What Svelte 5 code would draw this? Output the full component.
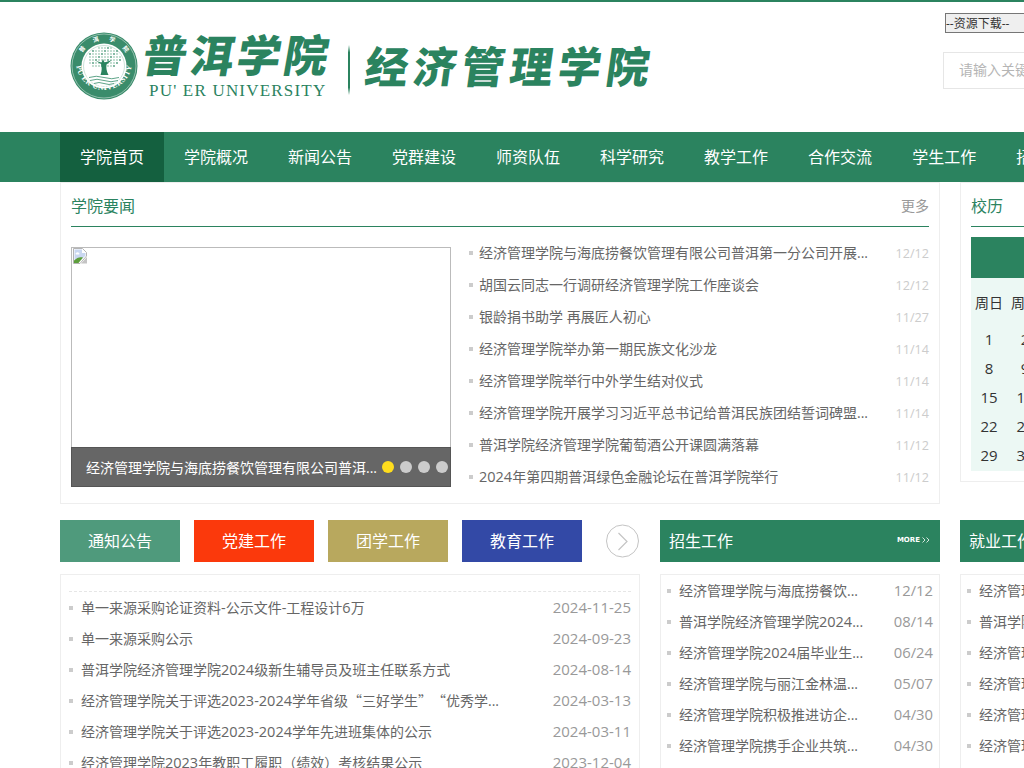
<script lang="ts">
	const navItems = ['学院首页', '学院概况', '新闻公告', '党群建设', '师资队伍', '科学研究', '教学工作', '合作交流', '学生工作', '招生就业'];

	const news = [
		['经济管理学院与海底捞餐饮管理有限公司普洱第一分公司开展...', '12/12'],
		['胡国云同志一行调研经济管理学院工作座谈会', '12/12'],
		['银龄捐书助学 再展匠人初心', '11/27'],
		['经济管理学院举办第一期民族文化沙龙', '11/14'],
		['经济管理学院举行中外学生结对仪式', '11/14'],
		['经济管理学院开展学习习近平总书记给普洱民族团结誓词碑盟...', '11/14'],
		['普洱学院经济管理学院葡萄酒公开课圆满落幕', '11/12'],
		['2024年第四期普洱绿色金融论坛在普洱学院举行', '11/12']
	];

	const tabs = [
		{ label: '通知公告', color: '#4f9a7c' },
		{ label: '党建工作', color: '#fb390c' },
		{ label: '团学工作', color: '#b8a85e' },
		{ label: '教育工作', color: '#3349a6' }
	];

	const notices = [
		['单一来源采购论证资料-公示文件-工程设计6万', '2024-11-25'],
		['单一来源采购公示', '2024-09-23'],
		['普洱学院经济管理学院2024级新生辅导员及班主任联系方式', '2024-08-14'],
		['经济管理学院关于评选2023-2024学年省级“三好学生”“优秀学...', '2024-03-13'],
		['经济管理学院关于评选2023-2024学年先进班集体的公示', '2024-03-11'],
		['经济管理学院2023年教职工履职（绩效）考核结果公示', '2023-12-04']
	];

	const admissions = [
		['经济管理学院与海底捞餐饮...', '12/12'],
		['普洱学院经济管理学院2024...', '08/14'],
		['经济管理学院2024届毕业生...', '06/24'],
		['经济管理学院与丽江金林温...', '05/07'],
		['经济管理学院积极推进访企...', '04/30'],
		['经济管理学院携手企业共筑...', '04/30']
	];

	const jobs = ['经济管理学院', '普洱学院', '经济管理学院', '经济管理学院', '经济管理学院', '经济管理学院'];

	const weekdays = ['周日', '周一', '周二', '周三', '周四', '周五', '周六'];
	const days = Array.from({ length: 31 }, (_, i) => i + 1);

	// speckled crown of the tree in the emblem
	const crown: { x: number; y: number; dark: boolean }[] = [];
	for (let y = 17; y <= 37; y += 3) {
		for (let x = 18; x <= 52; x += 3) {
			const inside = ((x - 35) / 17) ** 2 + ((y - 27) / 11) ** 2 <= 1;
			if (inside) crown.push({ x, y, dark: (x + y) % 4 === 0 });
		}
	}

	// digits and hyphens run a little wider than the CJK text, quotes take a full cell
	function parts(text: string) {
		return text
			.split(/(“|”|[0-9-]+)/)
			.filter(Boolean)
			.map((t) => ({
				t,
				cls: t === '“' ? 'quote open' : t === '”' ? 'quote close' : /^[0-9-]+$/.test(t) ? 'latin' : ''
			}));
	}
</script>

<div class="page">
	<header class="top">
		<div class="logo">
			<svg class="emblem" viewBox="0 0 70 70" role="img" aria-label="校徽">
				<defs>
					<path id="ring-bottom" d="M7 31 A28 28 0 0 0 63 31" />
					<path id="ring-top" d="M9.5 35 A25.5 25.5 0 0 1 60.5 35" />
				</defs>
				<circle cx="35" cy="35" r="33.5" fill="#3a8c6b" />
				<circle cx="35" cy="35" r="32" fill="none" stroke="#cfe3da" stroke-width="0.6" />
				<circle cx="35" cy="35" r="22.5" fill="#fff" />
				<circle cx="35" cy="35" r="20.5" fill="none" stroke="#a9cfbd" stroke-width="0.6" />
				<text class="ring-text" fill="#fff"><textPath href="#ring-bottom" startOffset="50%" text-anchor="middle" textLength="80">PU'ER UNIVERSITY</textPath></text>
				<text class="ring-cn" fill="#fff"><textPath href="#ring-top" startOffset="50%" text-anchor="middle" textLength="52" lengthAdjust="spacing">普洱学院</textPath></text>
				{#each crown as dot}
					<circle cx={dot.x} cy={dot.y} r="0.9" fill={dot.dark ? '#4c9a7b' : '#a9cfbd'} />
				{/each}
				<path d="M31.5 44 C33 40 33 36 32 33 L27 30 L32.5 31.5 L34 28 L35.5 31.5 L43 29 L37.5 33.5 C37 37 37.5 40 39.5 44 Z" fill="#2b835f" />
				<path d="M20 46.5 Q27 44 35 46.5 T50 46.5 M21 49.5 Q28 47 35 49.5 T49 49.5 M25 52.5 Q30 50.5 35 52.5 T45 52.5" fill="none" stroke="#4c9a7b" stroke-width="0.9" />
			</svg>
			<div class="school">
				<span class="school-cn">普洱学院</span>
				<span class="school-en">PU' ER UNIVERSITY</span>
			</div>
			<i class="divider"></i>
			<span class="faculty">经济管理学院</span>
		</div>
		<div class="tools">
			<select class="downloads">
				<option>--资源下载--</option>
			</select>
			<input class="search" type="text" placeholder="请输入关键字" />
		</div>
	</header>

	<nav class="nav">
		{#each navItems as item, i}
			<a href="#top" class:active={i === 0}>{item}</a>
		{/each}
	</nav>

	<main class="content">
		<section class="row">
			<div class="panel news">
				<div class="panel-head">
					<h2>学院要闻</h2>
					<span class="more">更多</span>
				</div>
				<div class="news-body">
					<div class="slide">
						<svg class="broken" viewBox="0 0 16 16" width="16" height="16" aria-hidden="true">
							<path d="M1.5 .5 H10.5 L14.5 4.5 V8 L8 15.5 H1.5 Z" fill="#fff" stroke="#b4b4b4" />
							<path d="M2.5 1.5 H10 V5 H13.5 V7.5 L9 12 H2.5 Z" fill="#c9d7f1" />
							<path d="M2 15 L2 12.5 C5 9.5 8 8.5 11 9.5 L6.5 15 Z" fill="#5d9e3c" />
							<path d="M4 5 a1.6 1.2 0 0 1 3 0 a1 1 0 0 1 0 1.6 H4 a1 1 0 0 1 0 -1.6" fill="#fff" />
							<path d="M15 9 V15.5 H9 Z" fill="#c4c4c4" />
						</svg>
						<div class="caption">
							<span>经济管理学院与海底捞餐饮管理有限公司普洱...</span>
							<div class="dots">
								<i class="on"></i><i></i><i></i><i></i>
							</div>
						</div>
					</div>
					<ul class="news-list">
						{#each news as [title, date]}
							<li>
								<span class="title">{#each parts(title) as p}<span class={p.cls}>{p.t}</span>{/each}</span>
								<span class="date">{date}</span>
							</li>
						{/each}
					</ul>
				</div>
			</div>

			<div class="panel calendar">
				<div class="panel-head">
					<h2>校历</h2>
				</div>
				<div class="cal-top"></div>
				<div class="cal-grid">
					{#each weekdays as day}
						<span class="weekday">{day}</span>
					{/each}
					{#each days as day}
						<span>{day}</span>
					{/each}
				</div>
			</div>
		</section>

		<section class="row lower">
			<div class="col-wide">
				<div class="tabs">
					{#each tabs as tab}
						<a href="#top" style="background: {tab.color}">{tab.label}</a>
					{/each}
					<svg class="next" viewBox="0 0 34 34" width="34" height="34" aria-hidden="true">
						<circle cx="16.5" cy="17" r="16" fill="#fff" stroke="#c4c4c4" />
						<path d="M12.5 9 L21 17.5 L12.5 26" fill="none" stroke="#c4c4c4" stroke-width="1.2" />
					</svg>
				</div>
				<div class="panel-list wide">
					<ul>
						{#each notices as [title, date]}
							<li>
								<span class="title">{#each parts(title) as p}<span class={p.cls}>{p.t}</span>{/each}</span>
								<span class="date">{date}</span>
							</li>
						{/each}
					</ul>
				</div>
			</div>

			<div class="col">
				<div class="green-head">
					<span>招生工作</span>
					<span class="more-tag">MORE
						<svg viewBox="0 0 8 6" width="8" height="6" aria-hidden="true"><path d="M.5 .5 L3 3 L.5 5.5 M4.5 .5 L7 3 L4.5 5.5" fill="none" stroke="#fff" stroke-width=".8" /></svg>
					</span>
				</div>
				<div class="panel-list">
					<ul>
						{#each admissions as [title, date]}
							<li>
								<span class="title">{#each parts(title) as p}<span class={p.cls}>{p.t}</span>{/each}</span>
								<span class="date">{date}</span>
							</li>
						{/each}
					</ul>
				</div>
			</div>

			<div class="col">
				<div class="green-head">
					<span>就业工作</span>
					<span class="more-tag">MORE
						<svg viewBox="0 0 8 6" width="8" height="6" aria-hidden="true"><path d="M.5 .5 L3 3 L.5 5.5 M4.5 .5 L7 3 L4.5 5.5" fill="none" stroke="#fff" stroke-width=".8" /></svg>
					</span>
				</div>
				<div class="panel-list">
					<ul>
						{#each jobs as title}
							<li><span class="title">{title}</span></li>
						{/each}
					</ul>
				</div>
			</div>
		</section>
	</main>
</div>

<style>
	:global(body) {
		overflow: hidden;
	}

	.page {
		width: 1024px;
		height: 768px;
		overflow: hidden;
		background: #fff;
		font-family: 'Open Sans', 'Noto Sans CJK SC', sans-serif;
		font-size: 14px;
		color: #666;
	}

	ul {
		list-style: none;
		margin: 0;
		padding: 0;
	}

	a {
		color: inherit;
		text-decoration: none;
	}

	.top {
		display: flex;
		width: 1300px;
		height: 132px;
		box-sizing: border-box;
		border-top: 2px solid #2b835f;
	}

	.logo {
		display: flex;
		align-items: flex-start;
		width: 943px;
		padding-left: 69px;
		box-sizing: border-box;
	}

	.emblem {
		flex: none;
		width: 70px;
		height: 70px;
		margin-top: 29px;
	}

	.ring-text {
		font-family: 'Liberation Serif', serif;
		font-size: 7.6px;
		font-weight: 700;
	}

	.ring-cn {
		font-family: 'Noto Sans CJK SC', sans-serif;
		font-size: 6px;
		font-weight: 700;
	}

	.school {
		display: flex;
		flex-direction: column;
		margin: 23px 0 0 0;
		width: 209px;
		color: #2b835f;
	}

	.school-cn {
		font-family: 'Noto Sans CJK SC', sans-serif;
		font-size: 44px;
		font-weight: 900;
		line-height: 56px;
		letter-spacing: 3px;
		white-space: nowrap;
		transform: skewX(-10deg);
		transform-origin: left bottom;
	}

	.school-en {
		font-family: 'Liberation Serif', serif;
		font-size: 17px;
		line-height: 20px;
		letter-spacing: 1.2px;
		margin-left: 10px;
		white-space: nowrap;
	}

	.divider {
		flex: none;
		width: 2px;
		height: 50px;
		margin: 43px 0 0 0;
		background: linear-gradient(#fff, #2b835f 15%, #2b835f 85%, #fff);
	}

	.faculty {
		flex: none;
		margin: 32px 0 0 16px;
		font-family: 'Noto Sans CJK SC', sans-serif;
		font-size: 43px;
		font-weight: 900;
		line-height: 60px;
		letter-spacing: 5.2px;
		color: #2b835f;
		white-space: nowrap;
		transform: skewX(-8deg);
	}

	.tools {
		display: flex;
		flex-direction: column;
		align-items: flex-start;
		padding-top: 11px;
	}

	.downloads {
		appearance: none;
		width: 130px;
		height: 20px;
		margin-left: 2px;
		padding: 0;
		border: 1px solid #767676;
		border-radius: 0;
		background: #efefef;
		font-family: 'Open Sans', 'Noto Sans CJK SC', sans-serif;
		font-size: 12px;
		color: #333;
	}

	.search {
		width: 240px;
		height: 37px;
		margin-top: 19px;
		padding: 0 15px 2px;
		box-sizing: border-box;
		border: 1px solid #e6e6e6;
		outline: none;
		font: inherit;
	}

	.search::placeholder {
		color: #b5b5b5;
	}

	.nav {
		display: flex;
		width: 1300px;
		height: 50px;
		padding-left: 60px;
		box-sizing: border-box;
		background: #2b835f;
		font-size: 16px;
		line-height: 50px;
		color: #fff;
	}

	.nav a {
		flex: none;
		padding: 0 20px;
		white-space: nowrap;
	}

	.nav a.active {
		background: #14603f;
	}

	.content {
		width: 1300px;
		padding-left: 60px;
	}

	.row {
		display: flex;
		gap: 20px;
		align-items: flex-start;
	}

	.panel {
		flex: none;
		box-sizing: border-box;
		border: 1px solid #eee;
		padding: 0 10px 10px;
	}

	.panel-head {
		display: flex;
		justify-content: space-between;
		align-items: center;
		height: 44px;
		box-sizing: border-box;
		border-bottom: 1px solid #2b835f;
	}

	.panel-head h2 {
		margin: 0;
		font-size: 16px;
		font-weight: 400;
		color: #2b835f;
	}

	.more {
		color: #999;
	}

	.news {
		width: 880px;
	}

	.news-body {
		display: flex;
		gap: 18px;
		padding-top: 20px;
	}

	.slide {
		position: relative;
		flex: none;
		width: 380px;
		height: 240px;
		box-sizing: border-box;
		border: 1px solid #bbb;
	}

	.broken {
		display: block;
	}

	.caption {
		position: absolute;
		left: -1px;
		right: -1px;
		bottom: -1px;
		display: flex;
		justify-content: space-between;
		align-items: center;
		height: 40px;
		padding: 0 2px 0 14px;
		box-sizing: border-box;
		background: #666;
		border: 1px solid #555;
		color: #fff;
		white-space: nowrap;
	}

	.dots {
		display: flex;
		gap: 6px;
	}

	.dots i {
		width: 12px;
		height: 12px;
		border-radius: 50%;
		background: #ccc;
	}

	.dots i.on {
		background: #ffdd1d;
	}

	.news-list {
		flex: 1;
		margin-top: -10px;
	}

	.news-list li {
		display: flex;
		justify-content: space-between;
		height: 32px;
		line-height: 32px;
		gap: 10px;
	}

	.news-list .title {
		padding-left: 10px;
	}

	.news-list .date {
		font-size: 12.6px;
		line-height: 33px;
		color: #ccc;
	}

	li {
		white-space: nowrap;
	}

	.title {
		position: relative;
		overflow: hidden;
	}

	.title::before {
		content: '';
		position: absolute;
		left: 0;
		top: 50%;
		width: 4px;
		height: 4px;
		margin-top: -2px;
		background: #ccc;
	}

	.latin {
		font-size: 14.5px;
	}

	.quote {
		display: inline-block;
		width: 14px;
		font-family: 'Noto Sans CJK SC', sans-serif;
	}

	.quote.open {
		text-align: right;
	}

	.quote.close {
		text-align: left;
	}

	.calendar {
		width: 300px;
		height: 300px;
	}

	.cal-top {
		height: 41px;
		margin-top: 10px;
		background: #2b835f;
	}

	.cal-grid {
		display: grid;
		grid-template-columns: repeat(7, 36px);
		grid-template-rows: 48px;
		grid-auto-rows: 29px;
		height: 193px;
		overflow: hidden;
		background: #ecf8f4;
		color: #333;
		text-align: center;
		line-height: 27px;
		font-size: 15px;
	}

	.weekday {
		grid-row: 1;
		font-size: 14px;
		line-height: 50px;
	}

	.lower {
		margin-top: 16px;
	}

	.col-wide {
		flex: none;
		width: 580px;
	}

	.col {
		flex: none;
		width: 280px;
	}

	.tabs {
		display: flex;
		align-items: center;
		gap: 14px;
		height: 42px;
	}

	.tabs a {
		flex: none;
		width: 120px;
		line-height: 42px;
		text-align: center;
		font-size: 16px;
		color: #fff;
	}

	.next {
		margin-left: 10px;
		flex: none;
	}

	.green-head {
		display: flex;
		justify-content: space-between;
		align-items: center;
		height: 42px;
		padding: 0 10px 0 9px;
		box-sizing: border-box;
		background: #2b835f;
		font-size: 16px;
		line-height: 42px;
		color: #fff;
	}

	.more-tag {
		display: flex;
		align-items: center;
		gap: 2px;
		margin-top: -2px;
		font-family: 'DejaVu Sans', sans-serif;
		font-size: 7px;
		font-weight: 700;
	}

	.panel-list {
		height: 300px;
		margin-top: 12px;
		box-sizing: border-box;
		border: 1px solid #eee;
		padding: 0 6px;
	}

	.panel-list li {
		display: flex;
		justify-content: space-between;
		height: 31px;
		line-height: 31px;
	}

	.panel-list .title {
		padding-left: 12px;
	}

	.panel-list .date {
		font-size: 14.8px;
		color: #999;
	}

	.panel-list.wide .date {
		font-size: 15px;
	}

	.panel-list.wide {
		padding: 16px 8px 0;
	}

	.panel-list.wide ul {
		border-top: 1px dashed #e6e6e6;
	}
</style>
